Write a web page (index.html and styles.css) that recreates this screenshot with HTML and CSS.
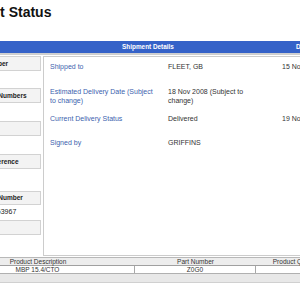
FILE: index.html
```html
<!DOCTYPE html>
<html>
<head>
<meta charset="utf-8">
<link rel="stylesheet" href="styles.css">
</head>
<body>
<div class="page">
  <h1 class="title">Shipment Status</h1>
  <div class="bar">
    <div class="bar-side"></div>
    <div class="bar-main">Shipment Details</div>
    <div class="bar-date">Date</div>
  </div>
  <div class="content">
    <aside class="side">
      <div class="side-head">Tracking Number</div>
      <div class="side-val v1"></div>
      <div class="side-head">Delivery Note Numbers</div>
      <div class="side-val v2"></div>
      <div class="side-head">Carrier</div>
      <div class="side-val v2"></div>
      <div class="side-head">Customer Reference</div>
      <div class="side-val v4"></div>
      <div class="side-head short">Consignment Number</div>
      <div class="side-val v5">7000001234563967</div>
      <div class="side-head">Invoice</div>
    </aside>
    <section class="panel">
      <div class="details">
        <div class="lbl">Shipped to</div>
        <div class="val">FLEET, GB</div>
        <div class="date">15 Nov</div>

        <div class="lbl">Estimated Delivery Date (Subject to change)</div>
        <div class="val">18 Nov 2008 (Subject to change)</div>
        <div class="date"></div>

        <div class="lbl">Current Delivery Status</div>
        <div class="val">Delivered</div>
        <div class="date">19 Nov</div>

        <div class="lbl">Signed by</div>
        <div class="val">GRIFFINS</div>
        <div class="date"></div>
      </div>
    </section>
  </div>
  <div class="products">
    <div class="prow phead">
      <div class="pc">Product Description</div>
      <div class="pc">Part Number</div>
      <div class="pc">Product Quantity</div>
      <div class="pc"></div>
    </div>
    <div class="prow pbody">
      <div class="pc">MBP 15.4/CTO</div>
      <div class="pc">Z0G0</div>
      <div class="pc"></div>
      <div class="pc"></div>
    </div>
    <div class="pfoot"></div>
  </div>
</div>
</body>
</html>
```
FILE: styles.css
```css
html, body {
  margin: 0;
  padding: 0;
  background: #ffffff;
  overflow: hidden;
}
body {
  font-family: "Liberation Sans", Arial, sans-serif;
  color: #333333;
}
.page {
  margin-left: -59px;
  width: 520px;
}
.title {
  margin: 5px 0 0 0;
  font-size: 14px;
  line-height: 14px;
  font-weight: bold;
  color: #111111;
}
.bar {
  margin-top: 22px;
  height: 12px;
  background: #3562c8;
  display: flex;
  color: #ffffff;
  font-weight: bold;
  font-size: 6.4px;
  line-height: 12px;
  border-bottom: 2px solid #cfcfcf;
}
.bar-side {
  width: 102px;
  flex: none;
}
.bar-main {
  width: 210px;
  flex: none;
  text-align: center;
}
.bar-date {
  padding-left: 43px;
}
.content {
  margin-top: 1px;
  display: flex;
  gap: 2px;
}
.side {
  width: 100px;
  flex: none;
  display: flex;
  flex-direction: column;
}
.side-head {
  height: 13px;
  line-height: 13px;
  border: 1px solid #d2d2d2;
  background: #f3f3f3;
  font-weight: bold;
  font-size: 6.5px;
  color: #222222;
  padding-left: 13px;
  white-space: nowrap;
  overflow: hidden;
}
.side-head.short {
  height: 12px;
  line-height: 12px;
}
.side-val {
  height: 17px;
  font-size: 7px;
  line-height: 14px;
  padding-left: 13px;
  color: #222222;
}
.side-val.v2 { height: 18px; }
.side-val.v4 { height: 22px; }
.side-val.v5 { height: 15px; }
.panel {
  width: 420px;
  height: 198px;
  border: 1px solid #cccccc;
  flex: none;
}
.details {
  display: grid;
  grid-template-columns: 118px 114px auto;
  grid-template-rows: 25px 27px 24px auto;
  padding: 4.5px 0 0 6px;
  font-size: 7px;
  line-height: 9px;
}
.lbl {
  color: #3d5fae;
  padding-right: 12px;
}
.val {
  color: #333333;
  padding-right: 29px;
}
.date {
  color: #333333;
}
.products {
  margin-top: 1px;
  border-top: 1px solid #b8b8b8;
  font-size: 6.5px;
  color: #333333;
}
.prow {
  display: grid;
  grid-template-columns: 194px 121px 82px 1fr;
}
.pc {
  text-align: center;
  white-space: nowrap;
}
.phead {
  height: 7px;
  line-height: 7px;
  background: #ededed;
  border-bottom: 1px solid #a0a0a0;
}
.pbody {
  height: 7px;
  line-height: 7px;
  background: #ffffff;
  border-bottom: 1px solid #b0b0b0;
}
.pbody .pc {
  border-right: 1px solid #a8a8a8;
}
.pfoot {
  height: 8px;
  background: #e8e8e8;
  border-bottom: 1px solid #d0d0d0;
}
```
